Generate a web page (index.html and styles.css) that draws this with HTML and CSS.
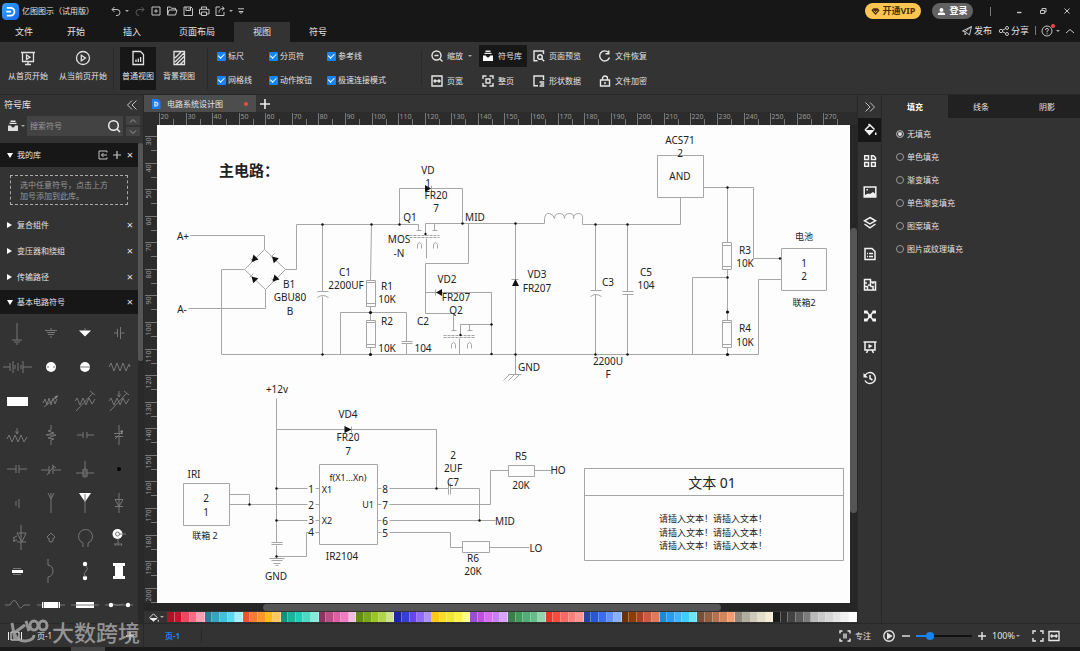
FILE: index.html
```html
<!DOCTYPE html>
<html lang="zh-CN">
<head>
<meta charset="utf-8">
<title>亿图图示</title>
<link rel="stylesheet" href="styles.css">
</head>
<body>
<header class="titlebar">
  <svg class="logo" viewBox="0 0 16 16"><defs><linearGradient id="lg" x1="0" y1="0" x2="1" y2="1"><stop offset="0" stop-color="#36a6ff"/><stop offset="1" stop-color="#1668f0"/></linearGradient></defs><rect width="16" height="16" rx="4" fill="url(#lg)"/><path d="M4.500 4.500H8a3.500 3.500 0 0 1 0 7.400H4.500M4 8.200h4.500" fill="none" stroke="#fff" stroke-width="1.700"/></svg>
  <h1 class="app-name">亿图图示（试用版）</h1>
  <div class="quick">
    <button aria-label="撤销"><svg class="ic" viewBox="0 0 12 12"><path d="M4.500 2 2 4.500 4.500 7M2 4.500h5a3 3 0 0 1 0 6H6"/></svg></button>
    <button class="tiny" aria-label="撤销列表"><i class="caret"></i></button>
    <button class="dim" aria-label="重做"><svg class="ic" viewBox="0 0 12 12"><path d="M7.500 2 10 4.500 7.500 7M10 4.500H5a3 3 0 0 0 0 6"/></svg></button>
    <button aria-label="新建"><svg class="ic" viewBox="0 0 12 12"><path d="M2 2h8v8H2zM6 4.200v3.600M4.200 6h3.600"/></svg></button>
    <button aria-label="打开"><svg class="ic" viewBox="0 0 12 12"><path d="M1.500 10V2h3l1 1.300h4V5M1.500 10l1.500-5h8l-1.500 5z"/></svg></button>
    <button aria-label="保存"><svg class="ic" viewBox="0 0 12 12"><path d="M2 2h7l1.500 1.500V10.500H2zM4 2v3.500h4.500V2M7 3v1.500"/></svg></button>
    <button aria-label="打印"><svg class="ic" viewBox="0 0 12 12"><path d="M3.500 4V2h5v2M3 9H1.500V4.300h9.500V9H9M3.500 7h5v3.500h-5z"/></svg></button>
    <button aria-label="导出"><svg class="ic" viewBox="0 0 12 12"><path d="M6 2H2v8.500h8V7M5 7.500C5 4 7 3.500 10 3.500M8 1.500l2.300 2L8 5.500"/></svg></button>
    <button class="tiny" aria-label="导出选项"><i class="caret"></i></button>
    <button aria-label="自定义"><svg class="ic" viewBox="0 0 12 12"><path d="M3 3.800h6M4 6.500l2 2 2-2z"/></svg></button>
  </div>
  <button class="pill vip"><svg viewBox="0 0 10 10"><path d="M2.500 1.500h5L9.500 4 5 9 .5 4z" fill="#4b3108"/><path d="m3 4 2 2.200L7 4" fill="none" stroke="#fdc74f"/></svg>开通VIP</button>
  <button class="pill login"><svg viewBox="0 0 10 10"><circle cx="5" cy="3.200" r="2.200" fill="#fff"/><path d="M1 9V8q0-2 2-2h4q2 0 2 2v1z" fill="#fff"/></svg>登录</button>
  <span class="title-sep"></span>
  <div class="window-buttons">
    <button aria-label="最小化"><svg class="ic" viewBox="0 0 12 12"><path d="M4 7.500h4.500" stroke-width="1.400"/></svg></button>
    <button aria-label="还原"><svg class="ic" viewBox="0 0 12 12"><path d="M3.500 5.500h4v3h-4zM5 5.500V3.500h4V7H7.500"/></svg></button>
    <button aria-label="关闭"><svg class="ic" viewBox="0 0 12 12"><path d="m3.500 3.500 5 5m0-5-5 5"/></svg></button>
  </div>
</header>

<nav class="menubar">
  <button class="first">文件</button><button>开始</button><button>插入</button><button>页面布局</button><button class="on">视图</button><button>符号</button>
  <div class="menu-right">
    <button><svg class="ic" viewBox="0 0 12 12"><path d="M1.500 6 10.500 1.500 8.500 10 5.500 7.500 4 10V6.800L10.500 1.500M1.500 6 4 6.800"/></svg>发布</button>
    <button><svg class="ic" viewBox="0 0 12 12"><circle cx="3" cy="6" r="1.700"/><circle cx="9" cy="3" r="1.500"/><circle cx="9" cy="9" r="1.500"/><path d="m4.500 5.200 3-1.500m-3 3 3 1.600"/></svg>分享</button>
    <span class="menu-sep"></span>
    <button class="help" aria-label="帮助"><svg class="ic" viewBox="0 0 12 12"><circle cx="6" cy="6" r="5"/><path d="M4.500 5q0-1.600 1.500-1.600T7.500 4.800Q7.500 5.700 6 6.300v1M6 8.200v1"/></svg><i class="dot"></i><i class="caret"></i></button>
    <button aria-label="收起功能区"><svg class="ic" viewBox="0 0 12 12"><path d="m2 8 4-3.500L10 8"/></svg></button>
  </div>
</nav>

<section class="ribbon">
  <div class="big-group play">
    <button class="big"><svg class="big-ic" viewBox="0 0 16 16"><path d="M1 2.500h14M2.500 3v8.500h11V3M8 12v2M5 14.500h6" /><path d="m6.500 5 3.500 2.200-3.500 2.200z"/></svg>从首页开始</button>
    <button class="big"><svg class="big-ic" viewBox="0 0 16 16"><circle cx="8" cy="8" r="6.500"/><path d="m6.300 5.200 4.200 2.800-4.200 2.800z"/></svg>从当前页开始</button>
  </div>
  <div class="big-group view">
    <button class="big on"><svg class="big-ic" viewBox="0 0 16 16"><path d="M3 1.500h7.500l3 3v10H3zM6 9.500v2.500M8.300 8.500V12M10.600 7v5"/></svg>普通视图</button>
    <button class="big"><svg class="big-ic" viewBox="0 0 16 16"><path d="M3 1.500h10.500v13H3zM4 8l6-6M4 12l9-9M5.500 14 13 6.500M9.500 14l3.500-3.500"/></svg>背景视图</button>
  </div>
  <div class="checks">
    <label><input type="checkbox" checked>标尺</label>
    <label><input type="checkbox" checked>分页符</label>
    <label><input type="checkbox" checked>参考线</label>
    <label><input type="checkbox" checked>网格线</label>
    <label><input type="checkbox" checked>动作按钮</label>
    <label><input type="checkbox" checked>极速连接模式</label>
  </div>
  <div class="tools">
    <button><svg class="tool-ic" viewBox="0 0 12 12"><circle cx="5.500" cy="5.500" r="4.500"/><path d="M3.500 5.500h4M9 9l2.500 2.500"/></svg>缩放<i class="caret"></i></button>
    <button class="on"><svg class="tool-ic" viewBox="0 0 12 12"><path d="M3.500 1.300h5M2.500 3.400h7"/><path d="M1 5.500h3q.3 2 2 2t2-2h3V11H1z" fill="#fff" stroke="none"/></svg>符号库</button>
    <button><svg class="tool-ic" viewBox="0 0 12 12"><path d="M4.500 10.800H1V1h9.500v3"/><circle cx="7" cy="7" r="2.300"/><path d="m8.700 8.700 2.500 2.500"/></svg>页面预览</button>
    <button><svg class="tool-ic" viewBox="0 0 12 12"><path d="M10.500 7.500A5 5 0 1 1 9.500 2.600M9.800.5v3.300H6.500"/></svg>文件恢复</button>
    <button><svg class="tool-ic" viewBox="0 0 12 12"><path d="M1 1h10v10H1zM3 6h6M4.500 4.500 3 6l1.500 1.500M7.500 4.500 9 6 7.500 7.500"/></svg>页宽</button>
    <button><svg class="tool-ic" viewBox="0 0 12 12"><path d="M1 4V1h3.500M7.500 1H11v3M1 8v3h3.500M7.500 11H11V8M4 4h4v4H4z"/></svg>整页</button>
    <button><svg class="tool-ic" viewBox="0 0 12 12"><path d="M5 10.800H1V1h9.500v4M6.500 7h4.700M7.500 9h3.700M6.500 11h4.700"/></svg>形状数据</button>
    <button><svg class="tool-ic" viewBox="0 0 12 12"><path d="M1.500 5h9v6h-9zM3.500 5V3.500a2.500 2.500 0 0 1 5 0V5M6 7v2.200"/></svg>文件加密</button>
  </div>
</section>

<main class="work">
  <aside class="library">
    <div class="lib-head"><h2>符号库</h2><button aria-label="收起"><svg class="ic" viewBox="0 0 12 12"><path d="M6 1.500 1.500 6 6 10.500M10.500 1.500 6 6l4.500 4.500"/></svg></button></div>
    <div class="search">
      <button class="lib-pick" aria-label="选择库"><svg class="tool-ic" viewBox="0 0 12 12"><path d="M3.500 1.300h5M2.500 3.400h7"/><path d="M1 5.500h3q.3 2 2 2t2-2h3V11H1z" fill="#ddd" stroke="none"/></svg><i class="caret"></i></button>
      <div class="search-box"><input type="text" placeholder="搜索符号" aria-label="搜索符号"><button aria-label="搜索"><svg class="ic" viewBox="0 0 14 14"><circle cx="6.500" cy="6.500" r="4.800" stroke-width="1.500"/><path d="m10 10 3 3" stroke-width="1.500"/></svg></button></div>
      <div class="spin"><button aria-label="上"><svg class="ic" viewBox="0 0 10 6"><path d="m2 4.500 3-3 3 3"/></svg></button><button aria-label="下"><svg class="ic" viewBox="0 0 10 6"><path d="m2 1.500 3 3 3-3"/></svg></button></div>
    </div>
    <div class="lib-body">
      <div class="lib-list">
        <div class="row dark"><i class="tri down"></i><span>我的库</span><button aria-label="导入"><svg class="ic" viewBox="0 0 12 12"><path d="M10 3.500V2H2v8h8V8.500M4.500 6H10M6.500 4l-2 2 2 2"/></svg></button><button aria-label="添加"><svg class="ic" viewBox="0 0 12 12"><path d="M6 2v8M2 6h8" stroke-width="1.200"/></svg></button><button class="x" aria-label="关闭">×</button></div>
        <p class="hint">选中任意符号，点击上方<br>加号添加到此库。</p>
        <div class="row"><i class="tri"></i><span>复合组件</span><button class="x" aria-label="关闭">×</button></div>
        <div class="row"><i class="tri"></i><span>变压器和绕组</span><button class="x" aria-label="关闭">×</button></div>
        <div class="row"><i class="tri"></i><span>传输路径</span><button class="x" aria-label="关闭">×</button></div>
        <div class="row dark"><i class="tri down"></i><span>基本电路符号</span><button class="x" aria-label="关闭">×</button></div>
        <div class="symbols">
          <svg viewBox="0 0 34 34"><path d="M17 7v17M12 24h10M14 26h6M16 28h2"/></svg>
          <svg viewBox="0 0 34 34"><path d="M17 12v2M11 14.500h12M13 16.500h8M14 18.500h6M16 21h2"/></svg>
          <svg viewBox="0 0 34 34"><path d="M17 12v3"/><path class="w" d="M11 14.500h12l-6 6z"/></svg>
          <svg viewBox="0 0 34 34"><path d="M12 17h3M15.500 13v8M18.500 11v12M18.500 17h4"/></svg>
          <svg viewBox="0 0 34 34"><path d="M3 17h7M10 13v8M13 11v12M15 15v4M18 13v8M21 15v4M23 11v12M23 17h9"/></svg>
          <svg viewBox="0 0 34 34"><circle class="w" cx="17" cy="17" r="5"/><path d="M13 17h2M19 17h2"/></svg>
          <svg viewBox="0 0 34 34"><circle class="w" cx="17" cy="17" r="5"/><path d="M12 17h10"/></svg>
          <svg viewBox="0 0 34 34"><path d="M7 17l2-4 3 8 3-8 3 8 3-8 3 8 3-7 1 3"/></svg>
          <svg viewBox="0 0 34 34"><path class="w" d="M7 13h21v9H7z"/></svg>
          <svg viewBox="0 0 34 34"><path d="M9 19l2-4 2 6 2-7 2 7 2-7 2 6 2-5M10 23 24 12"/><path class="g" d="m24 11-4 2 2 2z"/></svg>
          <svg viewBox="0 0 34 34"><path d="M7 17l2-3 3 7 3-7 3 7 3-7 3 6 3-5M8 27 25 9M22 7l5 4"/></svg>
          <svg viewBox="0 0 34 34"><path d="M7 17l2-3 3 7 3-7 3 7 3-7 3 6 3-5M8 27 25 9M22 7l5 4M17 7v6M15.500 10.500 17 13l1.500-2.500"/></svg>
          <svg viewBox="0 0 34 34"><path d="M7 21l2-4 3 7 3-7 3 7 3-7 3 7 3-5M17 10v6M15.500 13.500 17 16l1.500-2.500"/></svg>
          <svg viewBox="0 0 34 34"><path d="M17 7v5l-3 1 6 2-8 2 10 0-8 3 6 1-3 1v5"/></svg>
          <svg viewBox="0 0 34 34"><path d="M9 17h6M15 14v6M19 14v6M19 17h7"/></svg>
          <svg viewBox="0 0 34 34"><path d="M17 7v8M12 15.500h9M13 18.500h8M17 18v9M13 21l8-8"/><path class="g" d="m21 12-3 1 2 3z"/></svg>
          <svg viewBox="0 0 34 34"><path d="M7 17h9M16 13v8M19 13v8M19 17h8"/></svg>
          <svg viewBox="0 0 34 34"><path d="M7 18h8M15 14v8M19 14v8M19 18h8M13 23l7-9M18 13l4 3"/></svg>
          <svg viewBox="0 0 34 34"><path d="M17 9v8M8 21h7M15 17v8M19 17v8M16 17h2v8h-2zM19 21h7"/></svg>
          <svg viewBox="0 0 34 34"><circle cx="17" cy="17" r="2" class="k"/></svg>
          <svg viewBox="0 0 34 34"><path d="M16 15v5M19 13v9"/></svg>
          <svg viewBox="0 0 34 34"><path d="M17 7v20M14 7l3 6 3-6"/></svg>
          <svg viewBox="0 0 34 34"><path class="w" d="M11 7h12l-6 9z"/><path d="M17 8v19"/></svg>
          <svg viewBox="0 0 34 34"><path d="M17 7v20M13 13.500h8l-4 7zM13 20.500h8"/></svg>
          <svg viewBox="0 0 34 34"><path d="M21 5v25M17 13h9l-4 9zM17 22h9M13 18l4-2M13 21l4-1M14 18v4"/></svg>
          <svg viewBox="0 0 34 34"><path d="m15 19-2-2 4-4 4 4-2 2M15 18v3h1v1h2v-1h1v-3"/></svg>
          <svg viewBox="0 0 34 34"><path d="M15 27v-4a7 7 0 1 1 5 0v4"/></svg>
          <svg viewBox="0 0 34 34"><circle class="w" cx="15.500" cy="14" r="5"/><circle cx="15.500" cy="14" r="2"/><path d="M17 14h7M16 19v5M12 24h8M14 24l-1 2M17 24l-1 2M20 24l-1 2"/></svg>
          <svg viewBox="0 0 34 34"><path d="M13 14.500h8M13 20.500h8"/><path class="w" d="M12 16h11v3H12z"/></svg>
          <svg viewBox="0 0 34 34"><path d="M14 5v6q5 1 5 6t-5 6v6"/></svg>
          <svg viewBox="0 0 34 34"><circle class="w" cx="17" cy="10" r="2.200"/><circle class="w" cx="17" cy="24" r="2.200"/><path d="M18 12q3 3 0 5t-1 6"/></svg>
          <svg viewBox="0 0 34 34"><path class="w" d="M11 9h12v3h-2v10h2v3H11v-3h2V12h-2z"/></svg>
          <svg viewBox="0 0 34 34"><path d="M5 17h5q4-8 7-2t4 5 3-3h6"/></svg>
          <svg viewBox="0 0 34 34"><path d="M3 17h28"/><path class="w" d="M8 14h18v6H8z"/><path d="M9.500 14v6M24.500 14v6"/></svg>
          <svg viewBox="0 0 34 34"><path d="M3 17h28"/><path class="w" d="M8 14h18v6H8z"/><path d="M8 17h18"/></svg>
          <svg viewBox="0 0 34 34"><path d="M3 17h28M11 16l5 1.500 5-1.500"/><circle class="w" cx="9" cy="17" r="2.200"/><circle class="w" cx="26" cy="17" r="2.200"/></svg>
        </div>
      </div>
      <div class="lib-scroll"><i></i></div>
    </div>
  </aside>

  <section class="editor">
    <div class="doc-tabs">
      <button class="doc-tab"><svg viewBox="0 0 10 10"><path d="M1 0h6l2.500 2.500V10H1z" fill="#1f7df2"/><path d="M3 3.300h2.200a1.700 1.700 0 0 1 0 3.600H3M3 5.100h2.500" fill="none" stroke="#fff"/></svg>电路系统设计图<i class="modified"></i></button>
      <button class="new-tab" aria-label="新标签"><svg class="ic" viewBox="0 0 12 12"><path d="M6 1v10M1 6h10" stroke-width="1.600"/></svg></button>
    </div>
    <div class="ruler-top"><svg id="ruler-x" viewBox="143 112 714 13" width="714" height="13"></svg></div>
    <div class="stage">
      <div class="ruler-left"><svg id="ruler-y" viewBox="144 125 13 479" width="13" height="479"></svg></div>
      <div class="sheet">
        <svg class="circuit" viewBox="157 125 693 479" width="693" height="479">
          <g class="wires" transform="translate(.5 .5)">
            <path d="M190 235H264V249L244 269 265 289 285 269 264 249M244 269H221V354H758V279H781M265 289V308H188M285 269H296V224H418V230M416 230h5"/>
            <path d="M322 224V291M317 291h11M317 297q5-4 11 0M322 296V354"/>
            <path d="M371 224 370 280M366 280h9v26h-9zM366 282h9M366 303h9M370 306V320M366 320h9v27h-9zM366 322h9M366 344h9M370 347v7M340 354V312H406V341M401 341h11M401 343h11M406 343V354"/>
            <path d="M399 224V188H462V223M425 234V223H544V218q1-6 5-5t5 5q0-5 5-5t5 5q0-5 5-5t4 5q0-5 5-5t4 7V224H680V197"/>
            <path d="M434 223v7M432 230h5M426 238V258M468 223V263H425V313H453V330M451 330h5M425 292H491V354M460 335V324H491M459 338V354M469 324v6M467 330h5"/>
            <path d="M417 248v-4q2-4 4 0v4M433 248v-4q2-4 4 0v4M451 348v-4q2-4 4 0v4M467 348v-4q2-4 4 0v4"/>
            <path class="dash" d="M409 235h30M409 237h30M443 335h31M443 337h31"/>
            <path d="M515 223V374M508 374h13M509 374l-6 6M514 374l-6 6M519 374l-6 6M431 185v6M435 289v6M511 279h7M250 258l4 4M270 257l4-4M249 277l4-4M271 278l4 4"/>
            <path d="M595 224V290M590 290h11M590 296q5-4 11 0M595 294V354M627 224V291M622 291h11M622 294h11M627 294V354"/>
            <path d="M657 155h46v42h-46zM703 187H753V258H781M727 187V242M722 242h9v27h-9zM722 245h9M722 266h9M727 269V320M722 320h9v27h-9zM722 322h9M722 344h9M727 347v7M692 354V277H727M781 248h45v42h-45z"/>
            <path d="M276 398V542M271 542h11M271 544h11M276 545V558M269 558h15M271 560h11M273 563h7M275 565h3M276 429H436V488M351 426v6M183 483h46v42h-46zM229 494H249V504M229 504H307M276 488H307M276 520H307M276 556H306V532h2M315 488h4M315 504h4M315 520h4M315 532h4"/>
            <path d="M319 464h58v80h-58zM377 488h4M377 504h4M377 520h4M377 532h4M389 488H448M448 483v11M450 483v11M450 488H479V520M389 504H490V470H508M508 465h26v11h-26zM534 470H551M389 520H495M389 532H450V547H462M462 541h27v11h-27zM489 547H529"/>
            <path d="M584 468h259v92H584zM584 495H843"/>
          </g>
          <g class="solid">
            <path d="m251.500 262 2-7.500 5 5zM272 256.500l6.800 1.700-5 5zM251.500 276.500l6.800 1.700-5 5zM272.500 281.500l2-7 5 5zM425 185l6 3.500-6 3.500zM442 289l-6 3.500 6 3.500zM515.500 279l3.500 7h-7zM344.500 426l7 3.500-7 3.500z"/>
            <circle cx="322.500" cy="224.500" r="1.200"/><circle cx="371.500" cy="224.500" r="1.200"/><circle cx="399.500" cy="224.500" r="1.200"/><circle cx="462.500" cy="223.500" r="1.200"/><circle cx="515.500" cy="223.500" r="1.200"/><circle cx="595.500" cy="224.500" r="1.200"/><circle cx="627.500" cy="224.500" r="1.200"/><circle cx="322.500" cy="354.500" r="1.200"/><circle cx="370.500" cy="354.500" r="1.600"/><circle cx="370.500" cy="312.500" r="1.600"/><circle cx="491.500" cy="354" r="1.200"/><circle cx="515.500" cy="354.500" r="1.200"/><circle cx="595.500" cy="354.500" r="1.200"/><circle cx="627.500" cy="354.500" r="1.200"/><circle cx="727.500" cy="354.500" r="1.600"/><circle cx="727.500" cy="312" r="1.600"/><circle cx="727.500" cy="277.500" r="1.200"/><circle cx="727.500" cy="187.500" r="1.200"/><circle cx="780" cy="258.500" r="1.200"/><circle cx="425.500" cy="234" r="1.200"/><circle cx="460.500" cy="335" r="1.200"/><circle cx="491.500" cy="324.500" r="1.200"/><circle cx="276.500" cy="488.500" r="1.200"/><circle cx="276.500" cy="520.500" r="1.200"/><circle cx="276.500" cy="556.500" r="1.200"/><circle cx="249.500" cy="504.500" r="1.200"/><circle cx="436.500" cy="488.500" r="1.200"/><circle cx="479.500" cy="520.500" r="1.200"/>
          </g>
          <g class="labels" transform="translate(0 4)">
            <text x="183" y="236">A+</text><text x="182" y="309">A-</text>
            <text x="289" y="284">B1</text><text x="290" y="297">GBU80</text><text x="290" y="311">B</text>
            <text x="345" y="272">C1</text><text x="346" y="285">2200UF</text>
            <text x="387" y="286">R1</text><text x="387" y="299">10K</text><text x="387" y="321">R2</text><text x="387" y="348">10K</text>
            <text x="423" y="321">C2</text><text x="423" y="348">104</text>
            <text x="399" y="239">MOS</text><text x="399" y="253">-N</text>
            <text x="428" y="170">VD</text><text x="428" y="183">1</text><text x="436" y="195">FR20</text><text x="436" y="208">7</text>
            <text x="410" y="217">Q1</text><text x="475" y="217">MID</text>
            <text x="447" y="279">VD2</text><text x="456" y="297">FR207</text><text x="456" y="310">Q2</text>
            <text x="537" y="274">VD3</text><text x="537" y="288">FR207</text><text x="529" y="367">GND</text>
            <text x="608" y="282">C3</text><text x="608" y="361">2200U</text><text x="608" y="374">F</text>
            <text x="646" y="272">C5</text><text x="646" y="285">104</text>
            <text x="680" y="140">ACS71</text><text x="680" y="153">2</text><text x="680" y="176">AND</text>
            <text x="745" y="250">R3</text><text x="745" y="263">10K</text><text x="745" y="328">R4</text><text x="745" y="342">10K</text>
            <text x="804" y="263">1</text><text x="804" y="276">2</text><text class="cn" x="804" y="236">电池</text><text class="cn" x="804" y="302">联箱2</text>
            <text x="277" y="389">+12v</text><text x="348" y="414">VD4</text><text x="348" y="437">FR20</text><text x="348" y="451">7</text>
            <text x="194" y="474">IRI</text><text x="206" y="498">2</text><text x="206" y="512">1</text><text class="cn" x="205" y="535">联箱 2</text>
            <text x="311" y="489">1</text><text x="311" y="505">2</text><text x="311" y="520">3</text><text x="311" y="532">4</text>
            <text class="cn" x="348" y="477">f(X1...Xn)</text><text class="cn" x="327" y="489">X1</text><text class="cn" x="327" y="520">X2</text><text class="cn" x="368" y="504">U1</text>
            <text x="342" y="556">IR2104</text><text x="276" y="576">GND</text>
            <text x="385" y="489">8</text><text x="385" y="505">7</text><text x="385" y="521">6</text><text x="385" y="533">5</text>
            <text x="453" y="455">2</text><text x="453" y="468">2UF</text><text x="453" y="482">C7</text>
            <text x="521" y="456">R5</text><text x="521" y="485">20K</text><text x="558" y="470">HO</text><text x="505" y="521">MID</text>
            <text x="473" y="558">R6</text><text x="473" y="571">20K</text><text x="536" y="548">LO</text>
            <text class="cn start" x="659" y="518">请插入文本！请插入文本！</text><text class="cn start" x="659" y="532">请插入文本！请插入文本！</text><text class="cn start" x="659" y="545">请插入文本！请插入文本！</text>
          </g>
          <text class="heading start" x="219" y="176">主电路：</text>
          <text class="caption" x="712" y="488">文本 01</text>
        </svg>
      </div>
      <div class="scroll-y"><i></i></div>
    </div>
    <div class="scroll-x"><i></i></div>
    <div class="palette"><button class="bucket" aria-label="填充颜色"><svg viewBox="0 0 12 12"><path d="m2 6 4-4 4 4-1 2H3z" fill="none" stroke="#eee"/><path d="M2 6.500h8L6 10.500zM10.700 8.500h1v2h-1z" fill="#eee"/></svg><i class="caret"></i></button><div id="swatches"></div></div>
  </section>

  <div class="dock">
    <button class="collapse" aria-label="收起"><svg class="ic" viewBox="0 0 12 12"><path d="M1.500 1.500 6 6l-4.500 4.500M6 1.500 10.500 6 6 10.500"/></svg></button>
    <button class="on" aria-label="填充"><svg viewBox="0 0 14 14"><path d="m2 7 5-5 4.500 4.500M5.500 1l2 2"/><path class="f" d="M1.500 7h10L6.500 12.500zM12 9.500h1.500v2.500H12z"/></svg></button>
    <button aria-label="符号"><svg viewBox="0 0 14 14"><path d="M1.700 1.700h3.800v3.800H1.700zM8.500 1.700h2l2 2v1.800h-4zM1.700 8.500h3.800v3.800H1.700zM8.500 8.500h3.800v3.800H8.500z"/></svg></button>
    <button aria-label="图片"><svg viewBox="0 0 14 14"><path d="M1.200 2h11.600v10H1.200z"/><path class="f" d="m2 10 3-1.500 2 .5 3-2 2.500 2v3H2zM3.500 4H5v1.500H3.500z"/></svg></button>
    <button aria-label="图层"><svg viewBox="0 0 14 14"><path d="m7 1.500 5.500 3.300L7 8 1.500 4.800zM1.500 8 7 11.800 12.500 8"/></svg></button>
    <button aria-label="备注"><svg viewBox="0 0 14 14"><path d="M2 1.500h7l3 3v8H2zM4 6.500h1M6 6.500h4M4 9.500h1M6 9.500h4"/></svg></button>
    <button aria-label="平面图"><svg viewBox="0 0 14 14"><path d="M1.500 1.500h6v2.500h5v8h-11zM1.500 5h2.500M4.500 12V8.500h-3M7.500 4v4.500M7.500 7H5M10 4v2M10 12V8.500H7.500"/></svg></button>
    <button aria-label="关系"><svg viewBox="0 0 14 14"><path d="M2 3h2l6 8h2M2 11h2l6-8h2M5 7h4"/><path class="f" d="M1 1.500h3.500v3H1zM9.500 1.500H13v3H9.500zM1 9.500h3.500v3H1zM9.500 9.500H13v3H9.500z"/></svg></button>
    <button aria-label="演示"><svg viewBox="0 0 14 14"><path d="M.5 2h13M2 2v8h10V2M5 10l-1.500 3M9 10l1.500 3"/><path class="f" d="m5.500 4 4 2-4 2.500z"/></svg></button>
    <button aria-label="历史"><svg viewBox="0 0 14 14"><path d="M2 4.500A5.500 5.500 0 1 1 2 9.500M7 4v3.500l2.500 1.500"/><path class="f" d="M.5 2v4.500H5z"/></svg></button>
  </div>

  <aside class="props">
    <div class="prop-tabs"><button class="on">填充</button><button>线条</button><button>阴影</button></div>
    <div class="fills">
      <label><input type="radio" name="fill" checked>无填充</label>
      <label><input type="radio" name="fill">单色填充</label>
      <label><input type="radio" name="fill">渐变填充</label>
      <label><input type="radio" name="fill">单色渐变填充</label>
      <label><input type="radio" name="fill">图案填充</label>
      <label><input type="radio" name="fill">图片或纹理填充</label>
    </div>
  </aside>
</main>

<footer class="status">
  <div class="pages">
    <button aria-label="页面列表"><svg class="ic" viewBox="0 0 16 12"><path d="M1.500 2v8M14.500 2v8M4 2h8v8H4z"/></svg></button>
    <span>页-1</span>
    <button class="add-page" aria-label="添加页"><svg class="ic" viewBox="0 0 12 12"><path d="M6 2v8M2 6h8" stroke-width="1.400"/></svg></button>
    <div class="watermark"><svg viewBox="0 0 40 28"><path d="M3 6l3 17M16 8 5 16q4 9 12 8t8-6M17 4l3 10"/><ellipse cx="25" cy="8.500" rx="4" ry="4.500"/><ellipse cx="34" cy="8.500" rx="4" ry="4.500"/></svg>大数跨境</div>
  </div>
  <button class="page-tab">页-1</button>
  <div class="zoom-bar">
    <button class="focus"><svg class="tool-ic" viewBox="0 0 12 12"><path d="M1 3.500V1h2.500M8.500 1H11v2.500M1 8.500V11h2.500M8.500 11H11V8.500"/><path d="M4 3.500h4v5H4z" fill="#aaa" stroke="none"/></svg>专注</button>
    <button class="present" aria-label="播放"><svg class="tool-ic" viewBox="0 0 12 12"><circle cx="6" cy="6" r="5.200"/><path d="m4.700 3.800 3.600 2.200-3.600 2.200z" fill="#ddd"/></svg></button>
    <button aria-label="缩小"><svg class="tool-ic" viewBox="0 0 12 12"><path d="M2 6h8"/></svg></button>
    <input type="range" min="0" max="100" value="20" aria-label="缩放">
    <button aria-label="放大"><svg class="tool-ic" viewBox="0 0 12 12"><path d="M6 2v8M2 6h8"/></svg></button>
    <div class="percent"><select aria-label="缩放比例"><option>100%</option></select><i class="caret"></i></div>
    <button aria-label="全屏"><svg class="tool-ic" viewBox="0 0 12 12"><path d="M1 4V1h3M8 1h3v3M1 8v3h3M8 11h3V8"/></svg></button>
    <button aria-label="适应宽度"><svg class="tool-ic" viewBox="0 0 12 12"><path d="M1 1.500h10v9H1zM3 6h6M4.300 4.500 3 6l1.300 1.500M7.700 4.500 9 6 7.700 7.500"/></svg></button>
  </div>
</footer>
<div class="bottom-edge"><i></i></div>
<script src="app.js"></script>
</body>
</html>
```

FILE: styles.css
```css
* { box-sizing: border-box; }
body {
  margin: 0; height: 100vh; display: flex; flex-direction: column; overflow: hidden;
  background: #333; color: #e2e2e2;
  font: 8px/12px "Noto Sans", "Noto Sans CJK SC", sans-serif;
}
button, input, select { font: inherit; color: inherit; background: none; border: 0; padding: 0; margin: 0; }
button { display: flex; align-items: center; justify-content: center; white-space: nowrap; }
h1, h2, p { margin: 0; font-weight: 400; }
svg { display: block; flex: none; }
.ic { width: 12px; height: 12px; fill: none; stroke: #c4c4c4; stroke-width: 1; }
.tool-ic { width: 12px; height: 12px; fill: none; stroke: #e6e6e6; stroke-width: 1.4; }
.caret { width: 0; height: 0; border: 2px solid transparent; border-top-color: #aaa; border-bottom: 0; }

.titlebar { height: 22px; flex: none; display: flex; align-items: center; background: #171717; padding: 0 7px 0 2px; }
.logo { width: 17px; height: 17px; }
.app-name { font-size: 8px; line-height: 12px; margin-left: 3px; width: 88px; white-space: nowrap; }
.quick { display: flex; gap: 4px; align-items: center; flex: 1; }
.quick .tiny { width: 5px; margin: 0 -2px; }
.quick .dim { opacity: .4; margin-left: 3px; }
.pill { height: 16px; border-radius: 8px; font-size: 9px; font-weight: 700; gap: 3px; }
.pill svg { width: 9px; height: 9px; }
.vip { width: 56px; background: #fdc650; color: #4b3108; }
.login { width: 41px; background: #626262; color: #fff; margin-left: 11px; }
.title-sep { width: 1px; height: 9px; background: #777; margin: 0 22px 0 17px; }
.window-buttons { display: flex; gap: 12px; }

.menubar { height: 20px; flex: none; display: flex; background: #171717; font-size: 9px; }
.menubar > button { padding: 0 19px; }
.menubar > .first { padding: 0 15px; }
.menubar > .on { background: #333; }
.menu-right { margin-left: auto; display: flex; align-items: center; gap: 6px; padding: 0 4px 3px 0; }
.menu-right button { gap: 1px; }
.menu-sep { width: 1px; height: 9px; background: #777; margin-right: -1px; }
.help { position: relative; }
.help .ic { margin-right: 2px; }
.dot { position: absolute; top: -1px; left: 10px; width: 4px; height: 4px; border-radius: 50%; background: #f04848; }
.menu-right button:last-child { margin-left: -2px; }

.ribbon { height: 53px; flex: none; display: flex; align-items: center; border-bottom: 1px solid #282828; }
.big-group { display: flex; height: 43px; border-right: 1px solid #2a2a2a; }
.play { width: 114px; gap: 2px; padding-left: 3px; }
.view { width: 94px; padding-left: 6px; gap: 5px; }
.big { flex-direction: column; gap: 4px; width: 36px; padding-bottom: 4px; }
.play .big { width: 50px; }
.play .big + .big { width: 56px; }
.big.on { background: #171717; }
.big-ic { width: 16px; height: 16px; fill: none; stroke: #e2e2e2; stroke-width: 1.3; }
.checks { display: grid; grid-template-columns: 52px 58px auto; row-gap: 12px; width: 214px; padding-left: 9px; border-right: 1px solid #2a2a2a; }
.checks label { display: flex; align-items: center; gap: 2px; white-space: nowrap; }
.checks input { appearance: none; width: 9px; height: 9px; border-radius: 1px; background: #1684f7; display: grid; place-items: center; }
.checks input::after { content: ""; width: 5px; height: 3px; border: solid #fff; border-width: 0 0 1px 1px; transform: rotate(-45deg) translate(0, -1px); }
.tools { display: grid; grid-template-columns: 51px 51px 66px 60px; grid-template-rows: 22px 22px; row-gap: 3px; padding-left: 6px; }
.tools button { gap: 4px; justify-content: flex-start; padding-left: 3px; }
.tools .on { background: #171717; width: 48px; padding-left: 3px; }
.tools .caret { margin-left: 1px; }

.work { flex: 1; min-height: 0; display: flex; border-bottom: 1px solid #282828; }
.library { width: 143px; flex: none; display: flex; flex-direction: column; }
.lib-head { display: flex; justify-content: space-between; align-items: center; height: 20px; padding: 0 5px 0 4px; font-size: 9px; }
.lib-head h2 { font-size: 9px; }
.search { display: flex; height: 28px; padding: 1px 3px 7px 7px; gap: 3px; }
.lib-pick { width: 17px; gap: 2px; }
.search-box { flex: 1; min-width: 0; display: flex; background: #434343; padding: 0 2px 0 3px; }
.search-box input { flex: 1; width: 0; min-width: 0; outline: 0; }
.search-box input::placeholder { color: #999; opacity: 1; }
.search-box .ic { width: 14px; height: 14px; stroke: #eee; }
.spin { width: 14px; display: grid; gap: 2px; }
.spin button { background: #434343; }
.spin .ic { width: 10px; height: 6px; stroke: #999; }
.lib-body { flex: 1; min-height: 0; display: flex; }
.lib-list { flex: 1; overflow: hidden; }
.lib-scroll { width: 5px; background: #292929; }
.lib-scroll i { display: block; height: 218px; background: #555; border-radius: 2px; }
.row { height: 26px; display: flex; align-items: center; padding: 0 3px 0 7px; gap: 2px; }
.row.dark { height: 24px; background: #171717; }
.row span { flex: 1; margin-left: 2px; }
.tri { width: 0; height: 0; border: solid transparent; border-width: 3px 0 3px 5px; border-left-color: #fff; margin-right: 1px; }
.tri.down { border-color: #fff transparent transparent; border-width: 5px 3px 0; margin-right: 0; }
.x { width: 10px; font-size: 11px; }
.hint { margin: 8px 10px 7px; height: 30px; border: 1px dashed #aaa; color: #999; padding: 3px 9px; line-height: 11px; white-space: nowrap; }
.symbols { display: grid; grid-template-columns: repeat(4, 34px); padding-top: 2px; }
.symbols svg { width: 34px; height: 34px; fill: none; stroke: #777; stroke-width: 1; }
.symbols .w { fill: #fff; stroke: none; }
.symbols .g { fill: #888; stroke: none; }
.symbols .k { fill: #000; stroke: none; }

.editor { flex: 1; min-width: 0; display: flex; flex-direction: column; border-left: 1px solid #282828; }
.doc-tabs { display: flex; height: 17px; }
.doc-tab { width: 112px; background: #4d4d4d; gap: 6px; justify-content: flex-start; padding-left: 7px; }
.doc-tab svg { width: 10px; height: 10px; }
.modified { width: 4px; height: 4px; border-radius: 50%; background: #f04848; margin: 0 8px 0 auto; }
.new-tab { width: 18px; }
.new-tab .ic { stroke: #eee; }
.ruler-top { height: 13px; overflow: hidden; background: #2c2c2c; }
.ruler-top svg { margin-left: -1px; }
.ruler-left { width: 13px; flex: none; overflow: hidden; background: #2c2c2c; }
.ruler-top path, .ruler-left path { stroke: #777; fill: none; }
.ruler-top text, .ruler-left text { fill: #999; font-size: 7px; }
.stage { flex: 1; min-height: 0; display: flex; }
.sheet { flex: 1; min-width: 0; background: #fdfdfd; overflow: hidden; }
.wires { fill: none; stroke: #a6a6a6; stroke-width: 1; }
.dash { stroke-dasharray: 3 1; }
.solid { fill: #111; }
.circuit text { fill: #222; font-size: 10px; text-anchor: middle; }
.circuit .cn { font-size: 9px; }
.circuit .start { text-anchor: start; }
.circuit .heading { font-size: 15px; font-weight: 700; }
.circuit .caption { font-size: 14px; }
.scroll-y { width: 7px; background: #262626; padding-top: 103px; }
.scroll-y i { display: block; height: 285px; background: #555; border-radius: 4px; }
.scroll-x { height: 8px; background: #262626; padding: 1px 0 0 119px; }
.scroll-x i { display: block; width: 458px; height: 7px; background: #555; border-radius: 4px; }
.palette { height: 12px; display: flex; align-items: center; }
.bucket { width: 23px; gap: 1px; }
.bucket svg { width: 11px; height: 11px; }
#swatches { flex: 1; display: flex; height: 10px; }
#swatches button { flex: 1; border-right: 1px solid rgba(255,255,255,.35); }

.dock { width: 25px; flex: none; display: flex; flex-direction: column; gap: 7px; border: solid #282828; border-width: 0 1px; }
.dock button { height: 24px; }
.dock .collapse { height: 23px; margin-bottom: -7px; }
.dock .on { background: #171717; }
.dock svg:not(.ic) { width: 14px; height: 14px; fill: none; stroke: #f2f2f2; stroke-width: 1.5; }
.dock .f { fill: #f2f2f2; stroke: none; }
.props { width: 198px; flex: none; }
.prop-tabs { display: grid; grid-template-columns: repeat(3, 1fr); height: 23px; background: #212121; }
.prop-tabs .on { background: #333; font-weight: 700; color: #fff; }
.fills { display: grid; row-gap: 11px; padding: 10px 14px; }
.fills label { display: flex; align-items: center; gap: 3px; }
.fills input { appearance: none; width: 8px; height: 8px; border: 1px solid #999; border-radius: 50%; }
.fills input:checked { background: #ddd; box-shadow: inset 0 0 0 1px #333; }

.status { height: 23px; flex: none; display: flex; align-items: center; }
.pages { width: 144px; height: 23px; display: flex; align-items: center; padding: 0 7px; gap: 14px; position: relative; border-right: 1px solid #282828; }
.pages .ic { stroke: #eee; }
.pages button:first-child .ic { width: 16px; }
.add-page { margin-left: auto; }
.watermark { position: absolute; left: 9px; top: -8px; display: flex; align-items: center; gap: 3px; font: 500 22px/30px "Noto Sans CJK SC", sans-serif; color: #a5a5a5; opacity: .85; white-space: nowrap; }
.watermark svg { width: 40px; height: 28px; fill: none; stroke: #a5a5a5; stroke-width: 3; }
.page-tab { width: 58px; height: 15px; color: #1684f7; font-weight: 700; border-right: 1px solid #282828; }
.zoom-bar { margin-left: auto; display: flex; align-items: center; gap: 4px; padding-right: 20px; }
.focus { gap: 4px; }
.present { margin: 0 1px 0 8px; }
.zoom-bar input { appearance: none; width: 56px; height: 10px; }
.zoom-bar input::-webkit-slider-runnable-track { height: 2px; background: linear-gradient(90deg, #1684f7 22%, #111 22%); }
.zoom-bar input::-webkit-slider-thumb { appearance: none; width: 8px; height: 8px; border-radius: 50%; background: #1684f7; margin-top: -3px; }
.percent { display: flex; align-items: center; margin-right: 8px; }
.percent select { appearance: none; width: 24px; font-size: 9px; }
.bottom-edge { height: 4px; flex: none; background: #1a1a1a; padding-left: 71px; }
.bottom-edge i { display: block; width: 34px; height: 4px; background: #444; }
```

FILE: app.js
```js
const NS = 'http://www.w3.org/2000/svg';
const add = (parent, name, attrs, text) => {
  const el = document.createElementNS(NS, name);
  for (const key in attrs) el.setAttribute(key, attrs[key]);
  if (text) el.textContent = text;
  parent.appendChild(el);
};

const STEP = 26.57;
const rulerX = document.getElementById('ruler-x');
for (let i = 0; i < 26; i++) {
  const x = Math.round(159 + i * STEP) + 0.5;
  const half = Math.round(x + STEP / 2) + 0.5;
  add(rulerX, 'path', { d: `M${x} 113V125M${half} 119V125` });
  add(rulerX, 'text', { x: x + 1, y: 119 }, String(20 + i * 10));
}
const rulerY = document.getElementById('ruler-y');
for (let i = 0; i < 18; i++) {
  const y = Math.round(136 + i * STEP) + 0.5;
  const half = Math.round(y + STEP / 2) + 0.5;
  const label = String(30 + i * 10);
  add(rulerY, 'path', { d: `M145 ${y}H157M151 ${half}H157` });
  add(rulerY, 'text', { transform: `translate(151 ${y + 1 + label.length * 4}) rotate(-90)` }, label);
}

const COLORS = `a81524 c9102f ee4860 f96a85 fba0b0 2b7f96 35a5bf 3fc0dd 5cd8ef a5eefb
f05327 fd7c35 ff9728 ffb91b fcc862 15907b 17b69b 1fcdb4 4fd9c4 87ebdc
93305f bf4a86 de5fa3 f07cc4 efc0dd 648c12 7ba61f 9bc527 b2d34c cfe08e
1f27a8 3640d8 6a42f2 8f6bf7 ae93f5 ffc914 fbdd28 f2e72f fdf347 fefb88
9c4dd8 c24fe0 d76cf5 c581f8 d9a3fa 37804a 3f9c5c 54ad77 66bd8a 93d6ab
e33a2c fa4b40 f96a66 fd7f7b ff9690 24469f 2c57d3 3a6cf4 6490fb 8ab0f5
6a3207 8f3b05 a94225 cb5a3e e07a58 1c8bd6 2c9bf3 45b2ff 3ccfff 6ce4fb
75503a 94603f b5704d d3865a f39c70 8f8880 b3ad9e cecab8 e2dccb f2ecd6
1a1a1a 2e2e2e 434343 5c5c5c 7c7c7c bababa c9c9c9 d6d6d6 e4e4e4 f1f1f1 ffffff`.split(/\s+/);
const swatches = document.getElementById('swatches');
for (const color of COLORS) {
  const button = document.createElement('button');
  button.style.background = '#' + color;
  button.setAttribute('aria-label', '#' + color);
  swatches.appendChild(button);
}
```
